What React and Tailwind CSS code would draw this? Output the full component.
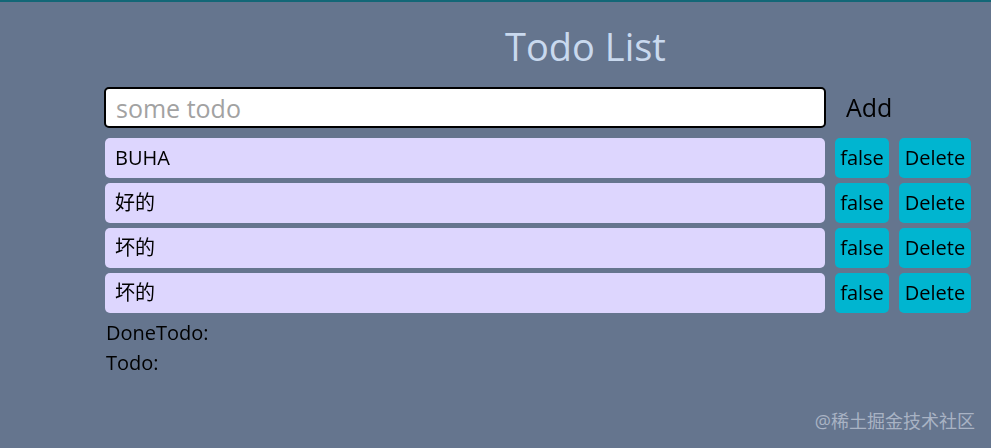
import React, { useState } from 'react';

const font = { fontFamily: '"Open Sans", "Noto Sans CJK SC", sans-serif' };

const App = () => {
    const [todos] = useState([
        { id: 1, text: 'BUHA', done: false },
        { id: 2, text: '好的', done: false },
        { id: 3, text: '坏的', done: false },
        { id: 4, text: '坏的', done: false },
    ]);

    return (
        <div className="relative w-full h-[448px] bg-[#65758e] border-t-2 border-[#136777] font-['Open_Sans','Noto_Sans_CJK_SC',sans-serif]">
            <h1 className="pl-[180px] pt-[20px] text-center text-[38px] leading-[48px] text-[#c9d9ee]">Todo List</h1>
            <div className="pl-[104px] pt-[17px]">
                <div className="flex items-center">
                    <input
                        autoFocus
                        placeholder="some todo"
                        className="w-[722px] h-[41px] rounded-[5px] bg-white border-2 border-black px-[10px] text-[25px] text-black placeholder:text-[#a2a2a2] outline-none"
                    />
                    <span className="ml-[20px] text-[25px] text-black">Add</span>
                </div>
                <ul className="mt-[10px] flex flex-col gap-[5px] pl-px">
                    {todos.map(todo => (
                        <li key={todo.id} className="flex gap-[10px]">
                            <div className="w-[720px] h-10 rounded-[5px] bg-[#ddd6fe] flex items-center px-[10px] text-[20px] text-black">{todo.text}</div>
                            <button className="w-[54px] h-10 rounded-[5px] bg-[#00b5d0] text-[20px] text-black">{String(todo.done)}</button>
                            <button className="w-[72px] h-10 rounded-[5px] bg-[#00b5d0] text-[20px] text-black">Delete</button>
                        </li>
                    ))}
                </ul>
                <div className="mt-[5px] pl-[2px] text-[20px] leading-[30px] text-black">
                    <p>DoneTodo:</p>
                    <p>Todo:</p>
                </div>
            </div>
            <span className="absolute right-[16px] bottom-[13px] text-[18px] text-[#a9b3c4]" style={font}>@稀土掘金技术社区</span>
        </div>
    );
};

export default App;
